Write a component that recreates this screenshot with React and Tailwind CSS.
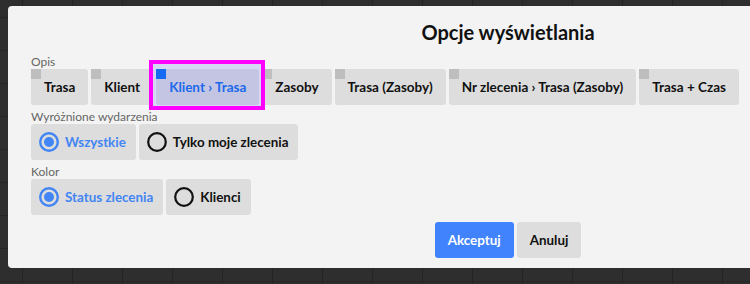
import React from 'react';

const descOptions = ['Trasa', 'Klient', 'Klient › Trasa', 'Zasoby', 'Trasa (Zasoby)', 'Nr zlecenia › Trasa (Zasoby)', 'Trasa + Czas'];

const RadioDot = ({ checked }) => (
  <svg width="20" height="20" viewBox="0 0 20 20" className="shrink-0">
    <circle cx="10" cy="10" r="8.8" fill="none" stroke={checked ? '#4285f4' : '#111111'} strokeWidth={checked ? 2.4 : 2.2} />
    {checked && <circle cx="10" cy="10" r="5" fill="#4285f4" />}
  </svg>
);

const RadioButton = ({ label, checked }) => (
  <button
    className={`flex h-9 items-center gap-[6px] rounded-[3px] bg-[#dddddd] pl-[8px] pr-[10px] text-[13.4px] font-bold ${
      checked ? 'text-[#4285f4]' : 'text-[#111111]'
    }`}
  >
    <RadioDot checked={checked} />
    {label}
  </button>
);

const DescButton = ({ label, selected }) => {
  const btn = (
    <button
      className={`relative h-9 rounded-[3px] bg-[#dddddd] px-[13px] text-[13.5px] font-bold ${
        selected ? 'text-[#0f6fe6]' : 'text-[#111111]'
      }`}
    >
      <span className={`absolute left-0 top-0 h-2.5 w-2.5 ${selected ? 'bg-[#0a6ff0]' : 'bg-[#bebebe]'}`} />
      {label}
    </button>
  );
  if (!selected) return btn;
  return (
    <div className="relative">
      {btn}
      {/* highlight box drawn over the selected option */}
      <span className="pointer-events-none absolute -bottom-[5px] -left-[7px] -right-[6px] -top-[9px] z-10 border-4 border-[#ff00ff] bg-[rgba(82,82,255,0.18)]" />
    </div>
  );
};

const Label = ({ children, className = '' }) => (
  <div className={`text-[12px] leading-[15px] text-[#666666] ${className}`}>{children}</div>
);

export default function App() {
  return (
    <div
      className="h-[284px] w-[750px] overflow-hidden bg-[#2e2e2e] bg-[image:linear-gradient(to_right,#242424_1px,transparent_1px),linear-gradient(to_bottom,#262626_1px,transparent_1px)] bg-[size:50px_33px] bg-[position:22px_17px] pl-[8px] pt-[6px] font-['Lato',sans-serif]"
    >
      <div className="flex w-[1000px] flex-col rounded-[4px] bg-[#f3f3f3] px-[23px] pb-[10px] pt-[12px]">
        <h2 className="h-[28px] text-center text-[20px] font-bold leading-[28px] text-[#111111]">Opcje wyświetlania</h2>

        <Label className="mt-[8px]">Opis</Label>
        <div className="flex gap-[3px]">
          {descOptions.map((o) => (
            <DescButton key={o} label={o} selected={o === 'Klient › Trasa'} />
          ))}
        </div>

        <Label className="mt-[4px]">Wyróżnione wydarzenia</Label>
        <div className="flex gap-[3px]">
          <RadioButton label="Wszystkie" checked />
          <RadioButton label="Tylko moje zlecenia" />
        </div>

        <Label className="mt-[4px]">Kolor</Label>
        <div className="flex gap-[3px]">
          <RadioButton label="Status zlecenia" checked />
          <RadioButton label="Klienci" />
        </div>

        <div className="mt-[7px] flex justify-center gap-[3px]">
          <button className="h-9 rounded-[3px] bg-[#4083fc] px-[13px] text-[13.4px] font-bold text-white">Akceptuj</button>
          <button className="h-9 rounded-[3px] bg-[#dddddd] px-[13px] text-[13.4px] font-bold text-[#111111]">Anuluj</button>
        </div>
      </div>
    </div>
  );
}
